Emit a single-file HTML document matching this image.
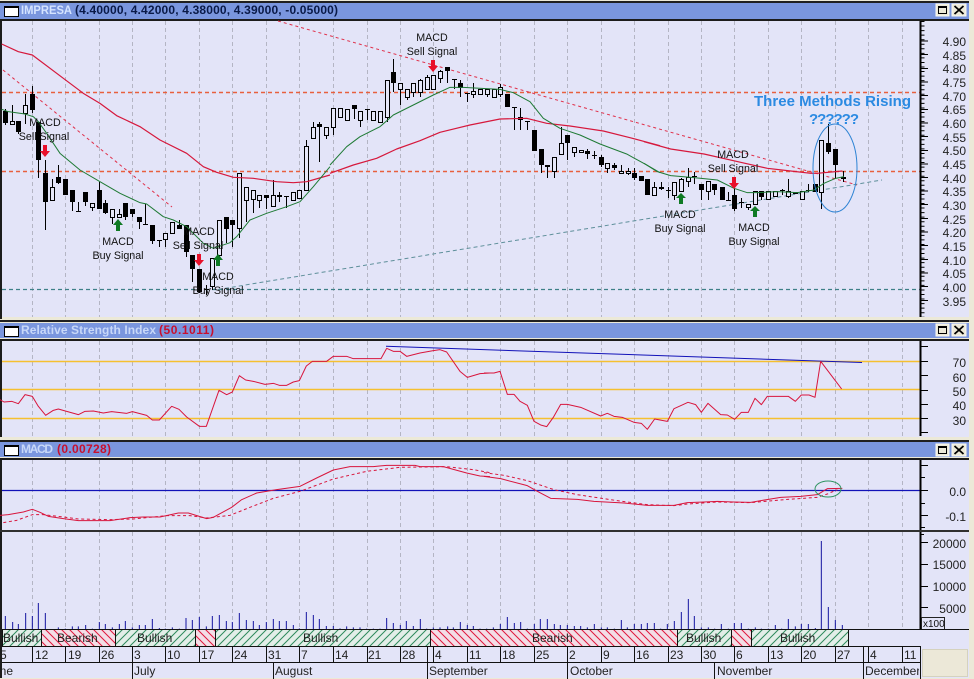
<!DOCTYPE html>
<html><head><meta charset="utf-8"><title>IMPRESA chart</title>
<style>
html,body{margin:0;padding:0;background:#ECE9D8;width:974px;height:679px;overflow:hidden}
svg{display:block;font-family:"Liberation Sans",Arial,sans-serif;font-size:12px}
</style></head><body>
<svg width="974" height="679" viewBox="0 0 974 679" xmlns="http://www.w3.org/2000/svg">
<defs>
<pattern id="g" width="8" height="8" patternUnits="userSpaceOnUse"><rect width="8" height="8" fill="#E2EEE8"/><path d="M-1 9L9 -1M-1 1L1 -1M7 9L9 7" stroke="#2E8A5C" stroke-width="1" fill="none"/></pattern>
<pattern id="r" width="8" height="8" patternUnits="userSpaceOnUse"><rect width="8" height="8" fill="#F3DDE6"/><path d="M-1 -1L9 9M-1 7L1 9M7 -1L9 1" stroke="#E0163C" stroke-width="1" fill="none"/></pattern>
<clipPath id="cd"><rect x="2" y="646" width="917" height="33"/></clipPath>
<g id="btns"><rect x="936" y="0" width="13" height="12" fill="#ECE9D8" stroke="#FBFAF2"/><rect x="938.5" y="2.5" width="8" height="7" fill="none" stroke="#000"/><path d="M938 3h9" stroke="#000" stroke-width="2"/><rect x="952" y="0" width="14" height="12" fill="#ECE9D8" stroke="#FBFAF2"/><path d="M954.5 2l9 8M963.5 2l-9 8" stroke="#000" stroke-width="1.8"/></g>
<g id="ico"><rect x="4.5" y="0.5" width="14" height="10" fill="#fff" stroke="#000"/><path d="M4 1h15" stroke="#000" stroke-width="2"/></g>
</defs>

<rect width="974" height="679" fill="#ECE9D8"/>
<!-- frames -->
<rect x="0" y="1" width="969" height="2" fill="#202020"/>
<rect x="0" y="320" width="969" height="2" fill="#202020"/>
<rect x="0" y="440" width="969" height="2" fill="#202020"/>
<rect x="0" y="3" width="969" height="16" fill="#7A96DE"/>
<rect x="0" y="323" width="969" height="15" fill="#7A96DE"/>
<rect x="0" y="442" width="969" height="15" fill="#7A96DE"/>
<rect x="0" y="19" width="969" height="2" fill="#1C1C1C"/>
<rect x="0" y="339" width="969" height="2" fill="#1C1C1C"/>
<rect x="0" y="458" width="969" height="2" fill="#1C1C1C"/>
<rect x="0" y="21" width="2" height="298" fill="#1C1C1C"/>
<rect x="0" y="341" width="2" height="96" fill="#1C1C1C"/>
<rect x="0" y="460" width="2" height="71" fill="#1C1C1C"/>
<rect x="0" y="531" width="2" height="147" fill="#1C1C1C"/>
<rect x="2" y="21" width="967" height="296" fill="#E3E4F8"/>
<rect x="2" y="341" width="967" height="96" fill="#E3E4F8"/>
<rect x="2" y="460" width="967" height="70" fill="#E3E4F8"/>
<rect x="0" y="530" width="969" height="2" fill="#303030"/>
<rect x="2" y="532" width="967" height="146" fill="#E3E4F8"/>

<!-- titlebars -->
<use href="#ico" x="0" y="6"/><use href="#ico" x="0" y="326"/><use href="#ico" x="0" y="445"/>
<use href="#btns" x="0" y="4"/><use href="#btns" x="0" y="324"/><use href="#btns" x="0" y="444"/>
<g font-weight="bold" font-size="12">
<text x="21" y="14" fill="#D5E4FF" textLength="51" lengthAdjust="spacingAndGlyphs">IMPRESA</text>
<text x="75" y="14" fill="#0A1A48" textLength="263">(4.40000, 4.42000, 4.38000, 4.39000, -0.05000)</text>
<text x="21" y="334" fill="#C8D8F8" textLength="135">Relative Strength Index</text>
<text x="159" y="334" fill="#C8102E" textLength="55">(50.1011)</text>
<text x="21" y="453" fill="#C8D8F8" textLength="32">MACD</text>
<text x="57" y="453" fill="#C8102E" textLength="54">(0.00728)</text>
</g>

<!-- grid -->
<path stroke="#B4B5C4" stroke-width="1" stroke-dasharray="4 3" fill="none" d="M32.5 21V317M65.5 21V317M99.5 21V317M132.5 21V317M165.5 21V317M199.5 21V317M232.5 21V317M266.5 21V317M299.5 21V317M333.5 21V317M367.5 21V317M400.5 21V317M433.5 21V317M467.5 21V317M500.5 21V317M534.5 21V317M567.5 21V317M601.5 21V317M634.5 21V317M668.5 21V317M701.5 21V317M734.5 21V317M768.5 21V317M801.5 21V317M835.5 21V317M868.5 21V317M902.5 21V317
M32.5 341V437M65.5 341V437M99.5 341V437M132.5 341V437M165.5 341V437M199.5 341V437M232.5 341V437M266.5 341V437M299.5 341V437M333.5 341V437M367.5 341V437M400.5 341V437M433.5 341V437M467.5 341V437M500.5 341V437M534.5 341V437M567.5 341V437M601.5 341V437M634.5 341V437M668.5 341V437M701.5 341V437M734.5 341V437M768.5 341V437M801.5 341V437M835.5 341V437M868.5 341V437M902.5 341V437
M32.5 460V530M65.5 460V530M99.5 460V530M132.5 460V530M165.5 460V530M199.5 460V530M232.5 460V530M266.5 460V530M299.5 460V530M333.5 460V530M367.5 460V530M400.5 460V530M433.5 460V530M467.5 460V530M500.5 460V530M534.5 460V530M567.5 460V530M601.5 460V530M634.5 460V530M668.5 460V530M701.5 460V530M734.5 460V530M768.5 460V530M801.5 460V530M835.5 460V530M868.5 460V530M902.5 460V530
M32.5 532V629M65.5 532V629M99.5 532V629M132.5 532V629M165.5 532V629M199.5 532V629M232.5 532V629M266.5 532V629M299.5 532V629M333.5 532V629M367.5 532V629M400.5 532V629M433.5 532V629M467.5 532V629M500.5 532V629M534.5 532V629M567.5 532V629M601.5 532V629M634.5 532V629M668.5 532V629M701.5 532V629M734.5 532V629M768.5 532V629M801.5 532V629M835.5 532V629M868.5 532V629M902.5 532V629"/>

<!-- main horizontals -->
<path d="M2 92.5H920M2 171.5H920" stroke="#E8603E" stroke-width="1.4" stroke-dasharray="4 3" fill="none"/>
<path d="M2 289.5H920" stroke="#3E8088" stroke-width="1.3" stroke-dasharray="4 3" fill="none"/>
<path d="M278 21L857 185M3 70L172 207" stroke="#E0304A" stroke-dasharray="3 3" fill="none"/>
<path d="M218 289.5L882 180" stroke="#5E8F9A" stroke-dasharray="4 3" fill="none"/>

<!-- candles: wicks -->
<path stroke="#000" fill="none" d="M5.5 109V125M12.5 105V125M18.5 121V134M25.5 94V124M32.5 86V113M38.5 122V178M45.5 160V230M52.5 179V201M58.5 165V184M65.5 179V195M72.5 190V211M78.5 202V211M76 211.5h5M85.5 192V206M92.5 203V211M99.5 182V209M105.5 200V214M112.5 209V224M119.5 209V218M125.5 203V220M132.5 209V217M139.5 217V229M145.5 204V224M143 224.5h5M152.5 225V244M159.5 240V247M157 240.5h5M165.5 233V247M172.5 222V233M179.5 220V229M186.5 225V257M192.5 255V282M199.5 269V293M206.5 285V295M204 289.5h5M212.5 258V290M219.5 220V257M226.5 217V243M232.5 220V247M239.5 173V238M246.5 187V222M253.5 190V213M259.5 195V208M266.5 195V209M273.5 180V206M279.5 192V202M286.5 196V208M284 196.5h5M293.5 192V200M299.5 190V198M306.5 140V191M313.5 122V138M319.5 122V162M326.5 127V139
M333.5 108V135M340.5 108V117M347.5 109V120M354.5 105V119M360.5 111V127M367.5 109V120M365 109.5h5M373.5 111V120M380.5 111V122M387.5 80V122M393.5 59V92M400.5 83V105M407.5 89V100M413.5 83V97M420.5 79V97M427.5 75V90M433.5 75V89M440.5 70V83M447.5 67V83M454.5 79V89M452 79.5h5M460.5 80V97M467.5 93V102M465 93.5h5M473.5 83V98M480.5 89V94M487.5 89V97M494.5 89V97M500.5 84V97M507.5 94V107M514.5 107V130M512 107.5h5M520.5 108V130M527.5 121V130M525 121.5h5M534.5 130V151M541.5 149V173M547.5 165V178M554.5 157V178M561.5 127V155M567.5 135V160M574.5 147V157M581.5 150V153M587.5 149V159M594.5 151V159M592 155.5h5M601.5 155V167M607.5 163V173M614.5 163V170M621.5 165V174M628.5 168V175M634.5 168V180M641.5 176V181M647.5 179V195M654.5 182V195
M661.5 182V190M668.5 187V198M666 190.5h5M674.5 182V200M681.5 178V191M688.5 168V187M694.5 172V184M692 176.5h5M701.5 184V200M708.5 181V200M714.5 184V195M722.5 187V200M728.5 192V200M726 200.5h5M734.5 187V211M741.5 198V208M739 202.5h5M748.5 204V210M755.5 191V204M761.5 191V200M768.5 191V199M775.5 191V196M782.5 189V195M780 190.5h5M788.5 179V198M795.5 192V194M802.5 191V199M808.5 184V192M806 190.5h5M815.5 184V192M821.5 140V209M828.5 124V154M835.5 149V179M843.5 171V182"/>
<!-- candles: filled -->
<path fill="#000" d="M3 111h5V123h-5zM16 121h5V132h-5zM30 94h5V110h-5zM36 122h5V160h-5zM43 173h5V202h-5zM56 177h5V183h-5zM63 179h5V195h-5zM70 190h5V202h-5zM83 192h5V202h-5zM97 190h5V209h-5zM103 203h5V213h-5zM123 203h5V217h-5zM130 209h5V214h-5zM137 217h5V222h-5zM150 225h5V241h-5zM177 225h5V229h-5zM184 225h5V252h-5zM190 255h5V269h-5zM197 269h5V292h-5zM224 217h5V229h-5zM230 220h5V225h-5zM264 195h5V198h-5zM277 195h5V197h-5zM317 124h5V127h-5zM352 105h5V109h-5zM391 72h5V83h-5zM445 67h5V71h-5zM458 83h5V88h-5zM505 94h5V107h-5zM532 130h5V151h-5zM539 149h5V165h-5zM545 165h5V167h-5zM565 135h5V143h-5zM585 151h5V154h-5zM599 157h5V165h-5zM612 165h5V168h-5zM632 173h5V178h-5zM639 176h5V181h-5zM645 179h5V195h-5zM659 187h5V189h-5zM699 184h5V190h-5zM712 184h5V190h-5zM720 187h5V200h-5zM732 195h5V209h-5zM759 191h5V197h-5zM793 192h5V194h-5zM813 184h5V192h-5zM826 143h5V152h-5zM833 149h5V165h-5zM841 177h5V179h-5z"/>
<!-- candles: hollow -->
<path fill="#E6E7F8" stroke="#000" d="M10.5 121.5h4V124.5h-4zM23.5 105.5h4V113.5h-4zM50.5 187.5h4V200.5h-4zM90.5 203.5h4V207.5h-4zM110.5 209.5h4V217.5h-4zM117.5 214.5h4V217.5h-4zM163.5 233.5h4V239.5h-4zM170.5 222.5h4V233.5h-4zM210.5 258.5h4V286.5h-4zM217.5 220.5h4V255.5h-4zM237.5 173.5h4V228.5h-4zM244.5 187.5h4V200.5h-4zM251.5 190.5h4V199.5h-4zM257.5 195.5h4V200.5h-4zM271.5 195.5h4V206.5h-4zM291.5 192.5h4V200.5h-4zM297.5 190.5h4V198.5h-4zM304.5 146.5h4V190.5h-4zM311.5 127.5h4V138.5h-4zM324.5 127.5h4V135.5h-4zM331.5 108.5h4V127.5h-4zM338.5 108.5h4V117.5h-4zM345.5 109.5h4V120.5h-4zM358.5 111.5h4V120.5h-4zM371.5 111.5h4V120.5h-4zM378.5 111.5h4V122.5h-4zM385.5 80.5h4V117.5h-4zM398.5 83.5h4V89.5h-4zM405.5 89.5h4V97.5h-4zM411.5 83.5h4V92.5h-4zM418.5 80.5h4V92.5h-4zM425.5 77.5h4V89.5h-4zM431.5 75.5h4V89.5h-4zM438.5 71.5h4V78.5h-4zM471.5 91.5h4V94.5h-4zM478.5 89.5h4V94.5h-4zM485.5 89.5h4V94.5h-4zM492.5 89.5h4V97.5h-4zM498.5 87.5h4V94.5h-4zM518.5 117.5h4V119.5h-4zM552.5 157.5h4V171.5h-4zM559.5 143.5h4V154.5h-4zM572.5 147.5h4V152.5h-4zM579.5 150.5h4V152.5h-4zM605.5 163.5h4V168.5h-4zM619.5 171.5h4V173.5h-4zM626.5 171.5h4V173.5h-4zM652.5 187.5h4V195.5h-4zM672.5 182.5h4V195.5h-4zM679.5 179.5h4V191.5h-4zM686.5 177.5h4V181.5h-4zM706.5 181.5h4V191.5h-4zM746.5 204.5h4V207.5h-4zM753.5 191.5h4V204.5h-4zM766.5 191.5h4V199.5h-4zM773.5 191.5h4V196.5h-4zM786.5 191.5h4V196.5h-4zM800.5 191.5h4V199.5h-4zM819.5 140.5h4V192.5h-4z"/>

<!-- moving averages -->
<g fill="none" stroke-linejoin="round">
<g transform="scale(.33333)" stroke-width="3.6" stroke="#D6183C">
<polyline points="5,132 55,155 97,165 190,235 250,280 300,310 350,347 420,380 480,420 560,460 610,500 650,517 700,532 760,535 830,545 880,548 920,545 990,525"/>
<polyline transform="translate(990)" points="0,520 70,495 140,475 200,447 270,422 330,397 420,375 510,357 590,355 650,370 720,378 820,393 900,413 990,437"/>
<polyline transform="translate(1932)" points="0,425 80,447 180,462 290,487 370,505 440,513 500,520 520,520 595,513"/>
</g>
<g transform="scale(.33333)" stroke-width="3" stroke="#1E7A34">
<polyline points="5,328 25,335 75,342 100,350 115,365 140,400 180,460 240,510 300,545 360,580 420,608 440,612 490,650 520,660 560,680 610,730 640,745 690,728 710,710 750,660 800,640 860,620 900,605 940,560 990,500"/>
<polyline transform="translate(990)" points="0,495 50,440 90,410 150,380 190,345 250,315 310,285 360,262 400,262 510,268 550,278 600,305 640,355 690,385 750,405 810,432 890,462 950,495 990,518"/>
<polyline transform="translate(1932)" points="0,490 40,515 80,527 150,533 220,540 270,565 310,578 340,578 400,575 460,578 510,570 540,550 575,535 600,530"/>
</g>
</g>
<ellipse cx="835" cy="168" rx="22" ry="44" fill="none" stroke="#2F84D4"/>

<!-- arrows -->
<g fill="#E8102A">
<path d="M43 145h4V151h3L45 157L40 151h3z"/>
<path d="M197 254h4V260h3L199 266L194 260h3z"/>
<path d="M431 60h4V66h3L433 72L428 66h3z"/>
<path d="M732 177h4V183h3L734 189L729 183h3z"/>
</g>
<g fill="#0F7A24">
<path d="M116 231h4V225h3L118 219L113 225h3z"/>
<path d="M216 266h4V260h3L218 254L213 260h3z"/>
<path d="M679 204h4V198h3L681 193L676 198h3z"/>
<path d="M753 217h4V211h3L755 206L750 211h3z"/>
</g>

<!-- labels -->
<g fill="#111" text-anchor="middle" font-size="10.7">
<text x="45" y="126">MACD</text><text x="44" y="140">Sell Signal</text>
<text x="118" y="245">MACD</text><text x="118" y="259">Buy Signal</text>
<text x="199" y="235">MACD</text><text x="198" y="249">Sell Signal</text>
<text x="218" y="280">MACD</text><text x="218" y="294">Buy Signal</text>
<text x="432" y="41">MACD</text><text x="432" y="55">Sell Signal</text>
<text x="733" y="158">MACD</text><text x="733" y="172">Sell Signal</text>
<text x="680" y="218">MACD</text><text x="680" y="232">Buy Signal</text>
<text x="754" y="231">MACD</text><text x="754" y="245">Buy Signal</text>
</g>
<text x="754" y="106" font-size="15" font-weight="bold" fill="#2B8AE2" textLength="157">Three Methods Rising</text>
<text x="809" y="124" font-size="15" font-weight="bold" fill="#2B8AE2" textLength="50">??????</text>

<!-- main axis -->
<path d="M920.5 21V317" stroke="#000" stroke-width="2"/>
<path d="M922.5 21V317" stroke="#000" stroke-width="4" stroke-dasharray="1 3.55"/>
<path stroke="#000" d="M920 41h8M920 54.5h8M920 68.5h8M920 82h8M920 95.5h8M920 109.5h8M920 123h8M920 136.5h8M920 150.5h8M920 164h8M920 177.5h8M920 191h8M920 204.5h8M920 218.5h8M920 232h8M920 245.5h8M920 259.5h8M920 273h8M920 286.5h8M920 300.5h8"/>
<g fill="#222" text-anchor="end">
<text x="966" y="46">4.90</text><text x="966" y="60">4.85</text><text x="966" y="73">4.80</text><text x="966" y="87">4.75</text><text x="966" y="101">4.70</text><text x="966" y="114">4.65</text><text x="966" y="128">4.60</text><text x="966" y="142">4.55</text><text x="966" y="155">4.50</text><text x="966" y="169">4.45</text><text x="966" y="183">4.40</text><text x="966" y="196">4.35</text><text x="966" y="210">4.30</text><text x="966" y="224">4.25</text><text x="966" y="237">4.20</text><text x="966" y="251">4.15</text><text x="966" y="265">4.10</text><text x="966" y="278">4.05</text><text x="966" y="292">4.00</text><text x="966" y="306">3.95</text>
</g>

<!-- RSI -->
<path d="M2 361.5H920M2 389.5H920M2 418.5H920" stroke="#F5C030" stroke-width="1.5" fill="none"/>
<path d="M386 346.3L862 362.5" stroke="#1212B8" fill="none"/>
<g fill="none" stroke="#D8153C" stroke-width="3" stroke-linejoin="round">
<polyline transform="translate(0,318) scale(.33333)" points="0,245 12,252 35,250 55,257 75,230 97,235 115,265 137,292 160,277 175,273 200,280 235,290 255,280 280,279 310,285 335,281 380,286 397,281 440,292 457,306 478,306 515,265 537,274 560,297 598,325 619,325 657,217 680,230 697,222 718,173 737,186 760,190 795,199 820,196 838,202 860,202 880,192 898,188 919,144 937,130 980,130 1000,115 1040,115 1060,122 1143,122 1160,91 1180,100 1200,100 1220,115 1260,105 1300,98 1320,95 1340,102 1380,160 1402,178 1440,167 1470,165"/>
<polyline transform="translate(484,318) scale(.33333)" points="0,165 30,165 48,160 70,229 90,229 108,250 130,262 150,310 170,321 188,326 208,298 230,259 250,259 290,268 350,294 370,286 390,295 415,298 450,313 472,316 490,334 512,303 550,310 570,272 590,263 612,253 635,260 652,283 672,256 710,290 730,291 752,304 772,283 793,283 813,241 832,260 850,235 913,235 934,250 952,231 975,231 993,238 1010,130 1073,213"/>
</g>
<path d="M920.5 341V436" stroke="#000" stroke-width="2"/>
<path stroke="#000" d="M920 346.5h8M920 361.5h8M920 375.5h8M920 390.5h8M920 404.5h8M920 418.5h8M920 432.5h8"/>
<g fill="#222" text-anchor="end"><text x="966" y="367">70</text><text x="966" y="382">60</text><text x="966" y="396">50</text><text x="966" y="410">40</text><text x="966" y="425">30</text></g>

<!-- MACD -->
<path d="M2 490.5H920" stroke="#1212B8" stroke-width="1.3" fill="none"/>
<g fill="none" stroke="#D8153C" stroke-width="3" stroke-linejoin="round">
<polyline transform="translate(0,318) scale(.33333)" points="0,592 25,590 70,582 97,574 120,583 145,595 190,602 235,608 330,608 390,599 430,597 480,597 535,585 565,585 620,602 640,598 695,568 725,545 770,525 830,515 900,505 950,480 1000,456 1050,446 1120,446 1160,442 1245,442 1260,446 1330,446 1400,465 1440,474 1470,476"/>
<polyline transform="translate(484,318) scale(.33333)" points="0,475 50,482 130,503 160,520 200,541 280,544 330,550 420,555 490,562 570,562 610,554 660,552 700,550 750,552 800,553 860,543 890,538 950,535 1000,530 1030,512 1075,511"/>
<polyline stroke-dasharray="9 8" transform="translate(0,318) scale(.33333)" points="10,614 50,607 97,590 130,590 190,597 235,603 330,605 400,603 500,593 570,593 620,600 690,592 750,568 820,541 900,520 1000,483 1100,460 1200,448 1340,446 1420,455 1470,464"/>
<polyline stroke-dasharray="9 8" transform="translate(484,318) scale(.33333)" points="0,464 60,472 130,488 210,515 280,530 400,548 490,560 570,563 610,558 700,552 800,554 900,545 1000,538 1030,528 1060,515"/>
</g>
<ellipse cx="828" cy="489" rx="13" ry="8" fill="none" stroke="#2E9460"/>
<path d="M920.5 460V530" stroke="#000" stroke-width="2"/>
<path stroke="#000" d="M920 465.5h8M920 477.5h5M920 490.5h8M920 503.5h5M920 515.5h8M920 527.5h5"/>
<g fill="#222" text-anchor="end"><text x="966" y="496">0.0</text><text x="966" y="521">-0.1</text></g>

<!-- Volume -->
<g fill="none" stroke="#1414A0" stroke-width="3">
<path transform="translate(0,530) scale(.33333)" d="M16 298V258M38 298V276M55 298V282M77 298V249M97 298V258M115 298V219M136 298V249M175 298V292M196 298V296M217 298V289M235 298V289M257 298V285M277 298V296M298 298V276M316 298V282M337 298V292M358 298V282M376 298V273M397 298V292M418 298V285M436 298V285M457 298V267M478 298V294M496 298V296M517 298V292M538 298V296M558 298V264M577 298V270M598 298V261M619 298V289M637 298V258M658 298V255M679 298V273M697 298V276M718 298V249M739 298V270M760 298V273M778 298V285M799 298V276M820 298V267M838 298V273M859 298V273M880 298V285M898 298V295M919 298V246M940 298V255M958 298V267M979 298V288M1000 298V288M1020 298V295M1040 298V289M1060 298V292M1080 298V292M1100 298V296M1120 298V296M1140 298V296M1160 298V264M1180 298V279M1201 298V285M1219 298V273M1240 298V288M1261 298V267M1280 298V296M1300 298V292M1320 298V292M1343 298V289M1360 298V292M1381 298V276M1402 298V285M1420 298V288M1440 298V296M1460 298V296"/>
<path transform="translate(484,530) scale(.33333)" d="M28 298V292M49 298V282M70 298V261M91 298V279M110 298V276M130 298V296M151 298V282M169 298V267M190 298V267M211 298V282M229 298V285M250 298V285M271 298V288M290 298V288M310 298V292M331 298V282M352 298V292M370 298V292M391 298V296M412 298V270M430 298V292M451 298V282M472 298V282M490 298V279M511 298V279M530 298V296M550 298V282M571 298V273M592 298V246M613 298V207M631 298V258M652 298V292M673 298V292M692 298V296M712 298V282M733 298V296M751 298V279M772 298V279M793 298V296M814 298V292M832 298V296M853 298V296M874 298V285M893 298V296M913 298V267M934 298V289M952 298V282M973 298V282M994 298V294M1012 298V33M1033 298V231M1054 298V270M1075 298V285"/>
</g>
<path d="M920.5 532V629" stroke="#000" stroke-width="2"/>
<path stroke="#000" d="M920 534.5h4M920 542.5h8M920 564.5h8M920 586.5h8M920 607.5h8"/>
<g fill="#222" text-anchor="end"><text x="966" y="548">20000</text><text x="966" y="569">15000</text><text x="966" y="591">10000</text><text x="966" y="613">5000</text></g>
<rect x="921.5" y="617.5" width="23" height="12" fill="#E3E4F8" stroke="#222"/>
<text x="923" y="627" font-size="10" fill="#111">x100</text>

<!-- bull/bear bar -->
<rect x="2" y="629.5" width="40" height="17" fill="url(#g)"/>
<rect x="42" y="629.5" width="74" height="17" fill="url(#r)"/>
<rect x="116" y="629.5" width="80" height="17" fill="url(#g)"/>
<rect x="196" y="629.5" width="20" height="17" fill="url(#r)"/>
<rect x="216" y="629.5" width="215" height="17" fill="url(#g)"/>
<rect x="431" y="629.5" width="247" height="17" fill="url(#r)"/>
<rect x="678" y="629.5" width="53" height="17" fill="url(#g)"/>
<rect x="731" y="629.5" width="20" height="17" fill="url(#r)"/>
<rect x="751" y="629.5" width="98" height="17" fill="url(#g)"/>
<path stroke="#111" fill="none" d="M2 629.5H969M2 646.5H920M2.5 630V646M41.5 630V646M115.5 630V646M195.5 630V646M215.5 630V646M430.5 630V646M677.5 630V646M731.5 630V646M751.5 630V646M848.5 630V646"/>
<g fill="#222">
<text x="3" y="642">Bullish</text><text x="57" y="642">Bearish</text><text x="137" y="642">Bullish</text><text x="303" y="642">Bullish</text><text x="532" y="642">Bearish</text><text x="686" y="642">Bullish</text><text x="780" y="642">Bullish</text>
</g>

<!-- dates -->
<path stroke="#111" fill="none" d="M2 662.5H920M920.5 646V662M32.5 646V662M65.5 646V662M99.5 646V662M132.5 646V662M165.5 646V662M199.5 646V662M232.5 646V662M266.5 646V662M299.5 646V662M333.5 646V662M367.5 646V662M400.5 646V662M427.5 646V662M433.5 646V662M467.5 646V662M500.5 646V662M534.5 646V662M567.5 646V662M601.5 646V662M634.5 646V662M668.5 646V662M701.5 646V662M734.5 646V662M768.5 646V662M801.5 646V662M835.5 646V662M863.5 646V662M868.5 646V662M902.5 646V662M132.5 662V679M273.5 662V679M427.5 662V679M567.5 662V679M714.5 662V679M863.5 662V679M920.5 662V679"/>
<g clip-path="url(#cd)" fill="#222">
<text x="0" y="659">5</text><text x="35" y="659">12</text><text x="68" y="659">19</text><text x="101" y="659">26</text><text x="134" y="659">3</text><text x="167" y="659">10</text><text x="201" y="659">17</text><text x="234" y="659">24</text><text x="268" y="659">31</text><text x="301" y="659">7</text><text x="335" y="659">14</text><text x="368" y="659">21</text><text x="402" y="659">28</text><text x="435" y="659">4</text><text x="469" y="659">11</text><text x="502" y="659">18</text><text x="536" y="659">25</text><text x="569" y="659">2</text><text x="603" y="659">9</text><text x="636" y="659">16</text><text x="670" y="659">23</text><text x="703" y="659">30</text><text x="736" y="659">6</text><text x="770" y="659">13</text><text x="803" y="659">20</text><text x="837" y="659">27</text><text x="870" y="659">4</text><text x="904" y="659">11</text>
<text x="-13" y="675">June</text><text x="134" y="675">July</text><text x="275" y="675">August</text><text x="429" y="675">September</text><text x="570" y="675">October</text><text x="717" y="675">November</text><text x="865" y="675">December</text>
</g>
<rect x="922.5" y="649.5" width="45" height="27" fill="#ECE8D8" stroke="#D5D2BE"/>
</svg>
</body></html>
